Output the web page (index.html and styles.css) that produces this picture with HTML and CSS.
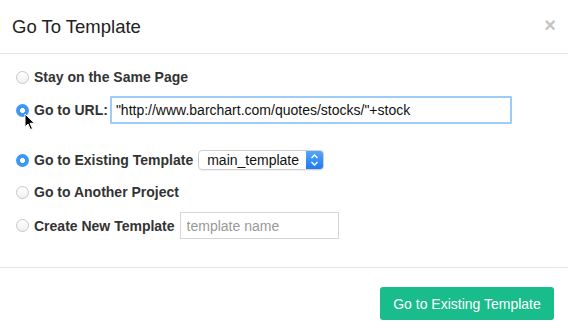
FILE: index.html
```html
<!DOCTYPE html>
<html lang="en">
<head>
    <meta charset="UTF-8">
    <title>Go To Template</title>
    <link rel="stylesheet" href="styles.css">
</head>
<body>
    <div class="modal">
        <div class="modal-header">
            <h3>Go To Template</h3>
            <span class="close">&times;</span>
        </div>
        <div class="modal-body">
            <label class="row row-same">
                <input type="radio" name="target">
                <span>Stay on the Same Page</span>
            </label>
            <label class="row row-url">
                <input type="radio" name="target" checked>
                <span>Go to URL:</span>
                <input type="text" class="url-input" value="&quot;http://www.barchart.com/quotes/stocks/&quot;+stock">
                <svg class="cursor" width="12" height="18" viewBox="0 0 12 18">
                    <path d="M1 1 L1 14 L4 11 L6.5 16.5 L8.5 15.6 L6 10.3 L10.5 10.3 Z" fill="#000" stroke="#fff" stroke-width="1"/>
                </svg>
            </label>
            <label class="row row-existing">
                <input type="radio" name="target2" checked>
                <span>Go to Existing Template</span>
                <span class="select">
                    <span class="select-value">main_template</span>
                    <span class="stepper">
                        <svg width="9" height="14" viewBox="0 0 9 14">
                            <path d="M1.5 5 L4.5 2 L7.5 5 M1.5 9 L4.5 12 L7.5 9" fill="none" stroke="#fff" stroke-width="1.4"/>
                        </svg>
                    </span>
                </span>
            </label>
            <label class="row row-project">
                <input type="radio" name="target3">
                <span>Go to Another Project</span>
            </label>
            <label class="row row-new">
                <input type="radio" name="target4">
                <span>Create New Template</span>
                <input type="text" class="name-input" placeholder="template name">
            </label>
        </div>
        <div class="modal-footer">
            <button class="btn-go">Go to Existing Template</button>
        </div>
    </div>
</body>
</html>
```
FILE: styles.css
```css
body { margin: 0; font-family: "Liberation Sans", Arial, sans-serif; color: #333; background: #fff; }
.modal { width: 568px; height: 335px; }
.modal-header { height: 53px; border-bottom: 1px solid #e5e5e5; display: flex; align-items: center; justify-content: space-between; padding: 0 12px; }
.modal-header h3 { margin: 0; font-size: 18.5px; font-weight: normal; color: #222; }
.close { font-size: 20px; font-weight: bold; color: #c4c4c4; margin-top: -3px; }
.modal-body { padding: 12px 0 0 16px; height: 201px; }
.row { display: flex; align-items: center; font-size: 14px; font-weight: bold; color: #333; position: relative; }
.row-same { height: 22px; }
.row-url { margin-top: 8px; height: 28px; }
.row-existing { margin-top: 26px; height: 20px; }
.row-project { margin-top: 11px; height: 22px; }
.row-new { margin-top: 9px; height: 27px; }
input[type=radio] { appearance: none; -webkit-appearance: none; width: 13px; height: 13px; margin: 0 5px 0 0; border: 1px solid #c8c8c8; border-radius: 50%; background: linear-gradient(#fff, #f0f0f0); box-sizing: border-box; }
input[type=radio]:checked { border: none; background: radial-gradient(circle, #fff 0 2.2px, #3d97f5 2.8px); }
.url-input { margin-left: 2px; width: 402px; height: 28px; box-sizing: border-box; border: 2px solid #9ecbf7; border-radius: 1px; padding: 0 4px; font: 14px "Liberation Sans", Arial, sans-serif; color: #111; outline: none; }
.cursor { position: absolute; left: 8px; top: 17px; }
.select { margin-left: 5px; width: 126px; height: 20px; box-sizing: border-box; border: 1px solid #d0d0d0; border-radius: 4px; display: flex; align-items: center; justify-content: space-between; font-weight: normal; color: #111; overflow: hidden; box-shadow: 0 1px 1px rgba(0,0,0,0.06); }
.select-value { padding-left: 8px; }
.stepper { width: 17px; height: 20px; background: linear-gradient(#5aa9fa, #1a78f0); display: flex; align-items: center; justify-content: center; }
.name-input { margin-left: 5px; width: 159px; height: 27px; box-sizing: border-box; border: 1px solid #d6d6d6; padding: 0 6px; font: 14px "Liberation Sans", Arial, sans-serif; outline: none; }
.name-input::placeholder { color: #999; }
.modal-footer { border-top: 1px solid #e5e5e5; display: flex; justify-content: flex-end; padding: 19px 14px 0 0; }
.btn-go { width: 174px; height: 33px; background: #19bc8b; color: #fff; border: none; border-radius: 3px; font: 14px "Liberation Sans", Arial, sans-serif; }
```
